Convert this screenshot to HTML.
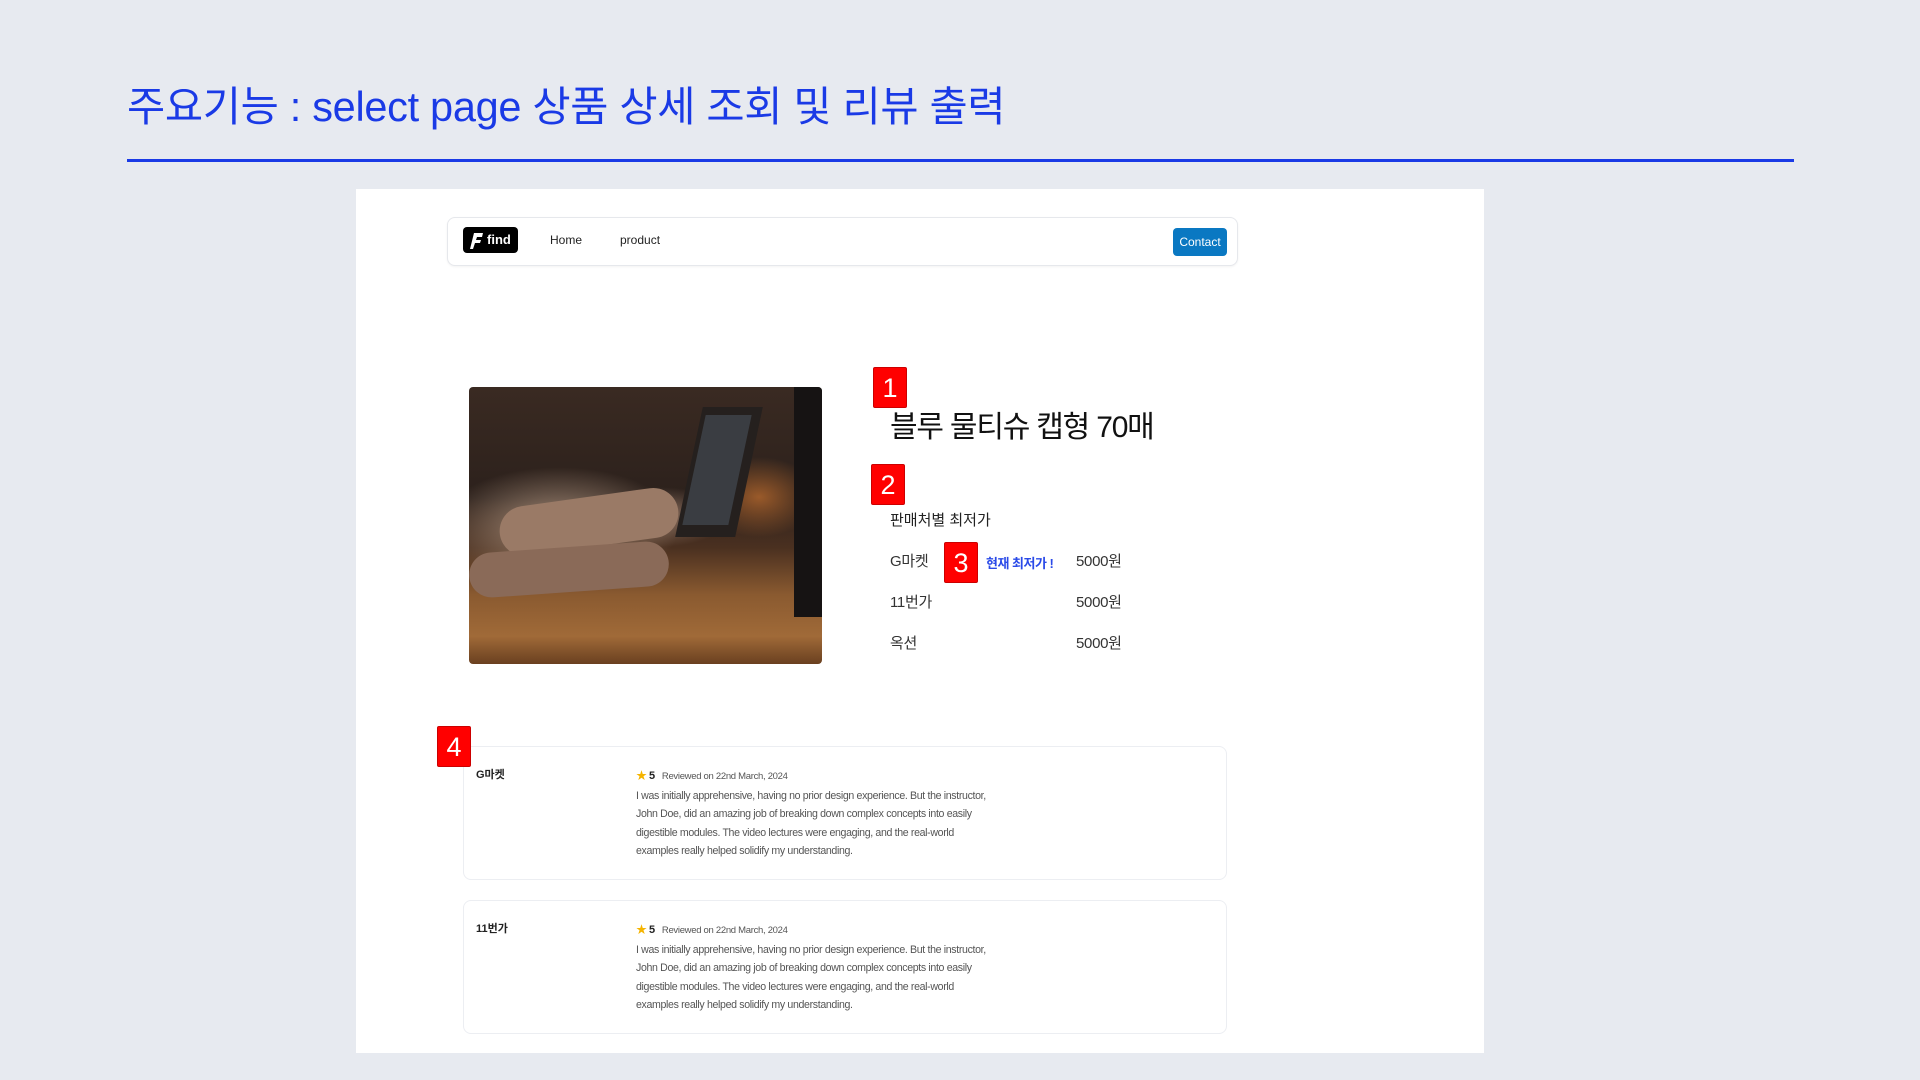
<!DOCTYPE html>
<html><head><meta charset="utf-8">
<style>
*{margin:0;padding:0;box-sizing:border-box}
body{width:1920px;height:1080px;background:#e7eaf0;position:relative;overflow:hidden;font-family:"Liberation Sans","Noto Sans CJK KR",sans-serif}
.abs{position:absolute}
.title{left:127px;top:73px;font-size:41.5px;color:#1a3ae6;white-space:nowrap;letter-spacing:-0.3px}
.line{left:127px;top:159px;width:1667px;height:3px;background:#1a3ae6}
.panel{left:356px;top:189px;width:1128px;height:864px;background:#fff}
.nav{left:447px;top:217px;width:791px;height:49px;border:1px solid #e6e8ec;border-radius:8px;background:#fff;box-shadow:0 1px 2px rgba(0,0,0,.05)}
.logo{left:463px;top:227px;width:55px;height:26px;background:#000;border-radius:4px;color:#fff;font-weight:bold;font-size:13px;line-height:26px;padding-left:24px}
.navt{font-size:12px;color:#222;top:233px}
.contact{left:1173px;top:228px;width:54px;height:28px;background:#0a78c2;border-radius:4px;color:#fff;font-size:12px;text-align:center;line-height:28px}
.img{left:469px;top:387px;width:353px;height:277px;border-radius:4px;overflow:hidden;
background:
radial-gradient(ellipse 60px 40px at 290px 110px,#9a5a2a,transparent),
radial-gradient(ellipse 120px 60px at 90px 140px,#a88e7a,transparent),
radial-gradient(ellipse 70px 30px at 190px 130px,#8c7060,transparent),
linear-gradient(180deg,#3a2a22 0%,#2c211c 40%,#4a3020 58%,#8a5a30 75%,#a06a38 90%,#6a4020 100%);}
.badge{background:#f00;color:#fff;font-size:27px;text-align:center;border-radius:2px;width:34px;height:41px;line-height:41px;border:1px solid #c00}
.ptitle{left:890px;top:402px;font-size:30px;color:#111;letter-spacing:-1.2px}
.sub{left:890px;top:509px;font-size:15px;color:#222}
.row{font-size:15px;color:#333;letter-spacing:-0.3px}
.card{left:463px;width:764px;height:134px;border:1px solid #eceef2;border-radius:8px;background:#fff}
.cname{font-size:11px;font-weight:bold;color:#222}
.rv{font-size:10.6px;color:#555;line-height:18.3px;letter-spacing:-0.35px;white-space:nowrap}
.meta{font-size:9.5px;color:#555;letter-spacing:-0.3px}
</style></head><body>
<div class="abs title">주요기능 : select page 상품 상세 조회 및 리뷰 출력</div>
<div class="abs line"></div>
<div class="abs panel"></div>
<div class="abs nav"></div>
<div class="abs logo"><svg class="abs" style="left:7px;top:5px" width="14" height="17" viewBox="0 0 14 17"><path d="M4 1h9l-1 4H7l-1 3h5l-1 3H5l-2 6H0z" fill="#fff"/></svg>find</div>
<div class="abs navt" style="left:550px">Home</div>
<div class="abs navt" style="left:620px">product</div>
<div class="abs contact">Contact</div>
<div class="abs img">
 <div class="abs" style="left:220px;top:20px;width:60px;height:130px;background:#25201e;transform:skewX(-12deg)"></div>
 <div class="abs" style="left:225px;top:28px;width:46px;height:110px;background:#3a3d42;transform:skewX(-12deg)"></div>
 <div class="abs" style="left:325px;top:0;width:28px;height:230px;background:#161313"></div>
 <div class="abs" style="left:30px;top:110px;width:180px;height:50px;background:#9a7a66;border-radius:30px;transform:rotate(-8deg)"></div>
 <div class="abs" style="left:0;top:160px;width:200px;height:45px;background:#8a6a58;border-radius:25px;transform:rotate(-4deg)"></div>
</div>
<div class="abs badge" style="left:873px;top:367px">1</div>
<div class="abs ptitle">블루 물티슈 캡형 70매</div>
<div class="abs badge" style="left:871px;top:464px">2</div>
<div class="abs sub">판매처별 최저가</div>
<div class="abs row" style="left:890px;top:550px">G마켓</div>
<div class="abs badge" style="left:944px;top:542px">3</div>
<div class="abs" style="left:986px;top:553px;font-size:13px;color:#2a4ae8;font-weight:bold;letter-spacing:-0.5px">현재 최저가 !</div>
<div class="abs row" style="left:1076px;top:550px">5000원</div>
<div class="abs row" style="left:890px;top:591px">11번가</div>
<div class="abs row" style="left:1076px;top:591px">5000원</div>
<div class="abs row" style="left:890px;top:632px">옥션</div>
<div class="abs row" style="left:1076px;top:632px">5000원</div>

<div class="abs card" style="top:746px"></div>
<div class="abs badge" style="left:437px;top:726px">4</div>
<div class="abs cname" style="left:476px;top:766px">G마켓</div>
<div class="abs meta" style="left:636px;top:767px"><span style="color:#f5b400;font-size:11px">★</span> <b style="color:#222;font-size:11px">5</b>&nbsp;&nbsp;&nbsp;Reviewed on 22nd March, 2024</div>
<div class="abs rv" style="left:636px;top:787px">I was initially apprehensive, having no prior design experience. But the instructor,<br>John Doe, did an amazing job of breaking down complex concepts into easily<br>digestible modules. The video lectures were engaging, and the real-world<br>examples really helped solidify my understanding.</div>

<div class="abs card" style="top:900px"></div>
<div class="abs cname" style="left:476px;top:920px">11번가</div>
<div class="abs meta" style="left:636px;top:921px"><span style="color:#f5b400;font-size:11px">★</span> <b style="color:#222;font-size:11px">5</b>&nbsp;&nbsp;&nbsp;Reviewed on 22nd March, 2024</div>
<div class="abs rv" style="left:636px;top:941px">I was initially apprehensive, having no prior design experience. But the instructor,<br>John Doe, did an amazing job of breaking down complex concepts into easily<br>digestible modules. The video lectures were engaging, and the real-world<br>examples really helped solidify my understanding.</div>
</body></html>
